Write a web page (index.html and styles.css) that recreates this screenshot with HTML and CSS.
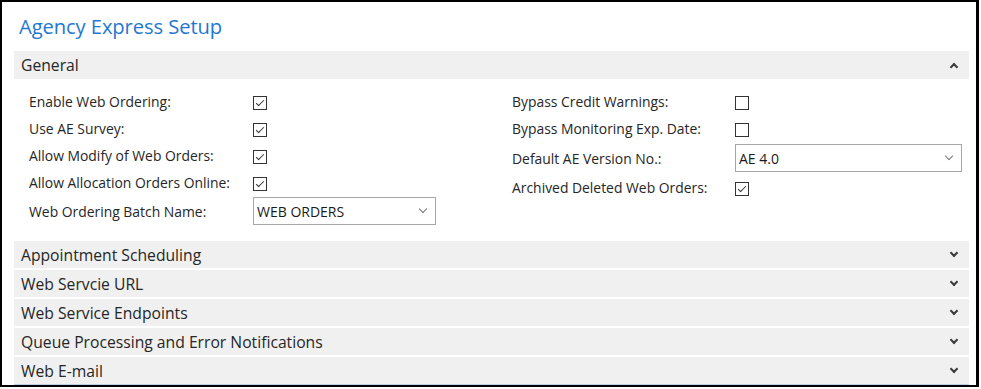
FILE: index.html
```html
<!DOCTYPE html>
<html lang="en">
<head>
    <meta charset="UTF-8">
    <title>Agency Express Setup</title>
    <link rel="stylesheet" href="styles.css">
</head>
<body>
    <div class="frame">
        <h1 class="page-title">Agency Express Setup</h1>

        <!-- General (expanded) -->
        <div class="section open">
            <div class="section-head">
                <span>General</span>
                <span class="chev up"></span>
            </div>
            <div class="section-body">
                <div class="col">
                    <div class="field">
                        <label>Enable Web Ordering:</label>
                        <span class="check on"></span>
                    </div>
                    <div class="field">
                        <label>Use AE Survey:</label>
                        <span class="check on"></span>
                    </div>
                    <div class="field">
                        <label>Allow Modify of Web Orders:</label>
                        <span class="check on"></span>
                    </div>
                    <div class="field">
                        <label>Allow Allocation Orders Online:</label>
                        <span class="check on"></span>
                    </div>
                    <div class="field with-select">
                        <label>Web Ordering Batch Name:</label>
                        <div class="select short">WEB ORDERS<span class="sel-arrow"></span></div>
                    </div>
                </div>
                <div class="col right">
                    <div class="field">
                        <label>Bypass Credit Warnings:</label>
                        <span class="check"></span>
                    </div>
                    <div class="field">
                        <label>Bypass Monitoring Exp. Date:</label>
                        <span class="check"></span>
                    </div>
                    <div class="field with-select">
                        <label>Default AE Version No.:</label>
                        <div class="select wide">AE 4.0<span class="sel-arrow"></span></div>
                    </div>
                    <div class="field">
                        <label>Archived Deleted Web Orders:</label>
                        <span class="check on"></span>
                    </div>
                </div>
            </div>
        </div>

        <div class="section">
            <div class="section-head"><span>Appointment Scheduling</span><span class="chev"></span></div>
        </div>
        <div class="section">
            <div class="section-head"><span>Web Servcie URL</span><span class="chev"></span></div>
        </div>
        <div class="section">
            <div class="section-head"><span>Web Service Endpoints</span><span class="chev"></span></div>
        </div>
        <div class="section">
            <div class="section-head"><span>Queue Processing and Error Notifications</span><span class="chev"></span></div>
        </div>
        <div class="section last">
            <div class="section-head"><span>Web E-mail</span><span class="chev"></span></div>
        </div>
    </div>
</body>
</html>
```

FILE: styles.css
```css
body {
    margin: 0;
    padding: 0;
    font-family: 'Open Sans', 'Noto Sans', sans-serif;
    color: #212121;
    background: #fff;
}
.frame {
    width: 979px;
    height: 387px;
    border: 2px solid #000;
    border-right-width: 3px;
    padding: 0 7px 0 12px;
    box-sizing: border-box;
    overflow: hidden;
}
.page-title {
    margin: 0;
    padding: 12px 0 0 5px;
    height: 49px;
    box-sizing: border-box;
    font-size: 20.2px;
    font-weight: normal;
    color: #1f78d1;
    line-height: 24px;
    letter-spacing: -0.1px;
}
.section {
    margin-bottom: 2px;
}
.section.open {
    margin-bottom: 0;
}
.section-head {
    background: #f0f0f0;
    height: 27px;
    display: flex;
    align-items: center;
    justify-content: space-between;
    padding: 0 12px 0 7px;
    font-size: 15.7px;
    color: #262626;
}
.section.open .section-head {
    height: 28px;
}
.section.last {
    margin-bottom: 0;
    border-bottom: 1px solid #b9cfe6;
}
.chev {
    width: 4px;
    height: 4px;
    border-right: 2px solid #3a3a3a;
    border-bottom: 2px solid #3a3a3a;
    transform: rotate(45deg);
    margin-top: -3px;
}
.chev.up {
    transform: rotate(-135deg);
    margin-top: 3px;
}
.section-body {
    display: flex;
    padding: 9px 0 16px 15px;
}
.col {
    width: 483px;
}
.col.right {
    width: auto;
}
.field {
    display: flex;
    align-items: center;
    height: 27px;
    font-size: 13.9px;
    color: #262626;
}
.field.with-select {
    height: 28px;
    margin: 1px 0 0;
}
.col.right .field.with-select {
    margin: 2px 0 2px;
}
.field label {
    width: 224px;
    flex: none;
}
.col.right .field label {
    width: 223px;
}
.check {
    width: 12px;
    height: 12px;
    border: 1px solid #333;
    margin-top: 2px;
    position: relative;
}
.check.on::after {
    content: '';
    position: absolute;
    left: 4px;
    top: 1px;
    width: 3px;
    height: 7px;
    border-right: 1.5px solid #333;
    border-bottom: 1.5px solid #333;
    transform: rotate(45deg);
}
.select {
    height: 28px;
    border: 1px solid #a6a6a6;
    box-sizing: border-box;
    display: flex;
    align-items: center;
    justify-content: space-between;
    padding: 0 9px 0 3px;
    font-size: 14px;
    color: #1a1a1a;
}
.select.short {
    width: 183px;
}
.select.wide {
    width: 227px;
}
.sel-arrow {
    width: 5px;
    height: 5px;
    border-right: 1px solid #777;
    border-bottom: 1px solid #777;
    transform: rotate(45deg);
    margin-top: -4px;
}
```
